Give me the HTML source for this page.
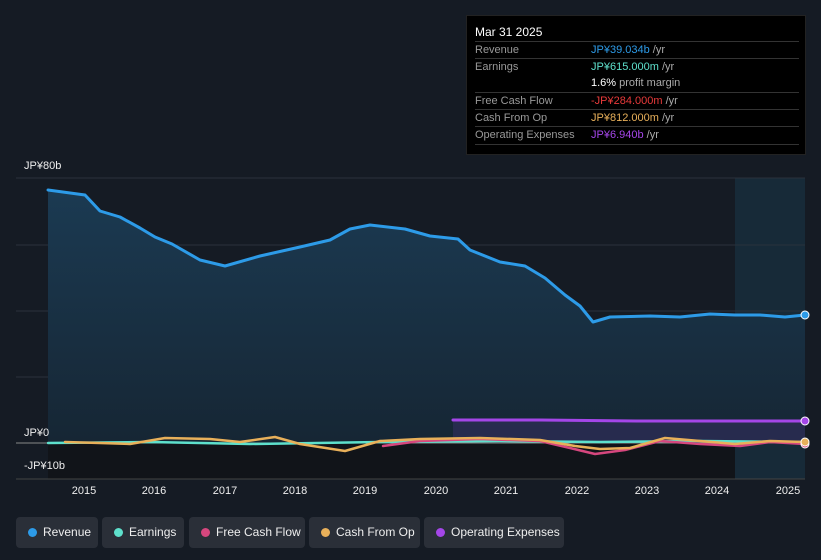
<!DOCTYPE html>
<html><head><style>
body{margin:0;width:821px;height:560px;background:#151b24;font-family:"Liberation Sans",sans-serif;overflow:hidden;position:relative;color:#ddd}
.tt{position:absolute;left:466px;top:15px;width:340px;height:140px;background:#000;border:1px solid #222;box-sizing:border-box;font-size:11px}
.tt .h{position:absolute;left:8px;top:9px;color:#fff;font-size:12px}
.row{position:absolute;left:8px;width:324px;border-top:1px solid #333;height:17px;line-height:17px;color:#999}
.row span{position:absolute;left:116px}
.lg{position:absolute;top:517px;height:31px;background:#2a2f38;border-radius:4px;font-size:12px;color:#eee;line-height:31px;box-sizing:border-box;padding-left:27px}
.lg i{position:absolute;left:12px;top:11px;width:9px;height:9px;border-radius:50%}
.yl{position:absolute;font-size:11px;color:#eee}
.xl{position:absolute;top:485px;font-size:11px;color:#eee;width:40px;text-align:center}
</style></head><body>
<svg width="821" height="560" style="position:absolute;left:0;top:0">
<defs><linearGradient id="g" x1="0" y1="0" x2="0" y2="1"><stop offset="0" stop-color="#1b3a52"/><stop offset="1" stop-color="#162634"/></linearGradient></defs>
<rect x="48" y="443" width="687" height="36" fill="#111419"/>
<rect x="735" y="178" width="70" height="301" fill="#172a38"/>
<line x1="16" y1="178" x2="805" y2="178" stroke="#2a313b"/>
<line x1="16" y1="245" x2="805" y2="245" stroke="#2a313b"/>
<line x1="16" y1="311" x2="805" y2="311" stroke="#2a313b"/>
<line x1="16" y1="377" x2="805" y2="377" stroke="#2a313b"/>
<path d="M48,190 L85,195 L100,211 L120,217 L140,228 L155,237 L172,244 L200,260 L225,266 L260,256 L300,247 L330,240 L350,229 L370,225 L405,229 L430,236 L458,239 L470,250 L500,262 L525,266 L545,278 L565,295 L580,306 L593,322 L610,317 L650,316 L680,317 L710,314 L735,315 L760,315 L785,317 L805,315 L805,443 L48,443Z" fill="url(#g)"/>
<path d="M453,421 L805,421 L805,443 L453,443Z" fill="#2c2d55" opacity=".8"/>
<line x1="16" y1="443" x2="805" y2="443" stroke="#888"/>
<g stroke-linejoin="round" stroke-linecap="round" fill="none">
<path d="M48,190 L85,195 L100,211 L120,217 L140,228 L155,237 L172,244 L200,260 L225,266 L260,256 L300,247 L330,240 L350,229 L370,225 L405,229 L430,236 L458,239 L470,250 L500,262 L525,266 L545,278 L565,295 L580,306 L593,322 L610,317 L650,316 L680,317 L710,314 L735,315 L760,315 L785,317 L805,315" stroke="#2d9be8" stroke-width="3"/>
<path d="M453,420 L540,420 L640,421 L805,421" stroke="#a446e8" stroke-width="3"/>
<path d="M48,443 L150,442 L250,444 L380,442 L500,441 L600,442 L700,441 L805,442" stroke="#5ee0cc" stroke-width="2.5"/>
<path d="M383,446 L420,441 L480,439 L540,441 L570,448 L595,454 L625,450 L660,441 L700,444 L740,446 L770,442 L805,444" stroke="#d6477e" stroke-width="2.5"/>
<path d="M65,442 L100,443 L130,444 L165,438 L210,439 L240,442 L275,437 L300,444 L345,451 L380,441 L420,439 L480,438 L540,440 L575,446 L600,449 L630,448 L665,438 L700,441 L735,444 L770,441 L805,442" stroke="#e8b05a" stroke-width="2.5"/>
</g>
<line x1="16" y1="479" x2="805" y2="479" stroke="#444"/>
<circle cx="805" cy="315" r="4" fill="#2d9be8" stroke="#fff"/>
<circle cx="805" cy="421" r="4" fill="#a446e8" stroke="#fff"/>
<circle cx="805" cy="444" r="4" fill="#d6477e" stroke="#fff"/>
<circle cx="805" cy="442" r="4" fill="#e8b05a" stroke="#fff"/>
</svg>
<div class="yl" style="left:24px;top:160px">JP¥80b</div>
<div class="yl" style="left:24px;top:427px">JP¥0</div>
<div class="yl" style="left:24px;top:460px">-JP¥10b</div>
<div class="xl" style="left:64px">2015</div><div class="xl" style="left:134px">2016</div><div class="xl" style="left:205px">2017</div><div class="xl" style="left:275px">2018</div><div class="xl" style="left:345px">2019</div><div class="xl" style="left:416px">2020</div><div class="xl" style="left:486px">2021</div><div class="xl" style="left:557px">2022</div><div class="xl" style="left:627px">2023</div><div class="xl" style="left:697px">2024</div><div class="xl" style="left:768px">2025</div>
<div class="tt"><div class="h">Mar 31 2025</div>
<div class="row" style="top:25px">Revenue<span style="color:#2d9be8">JP¥39.034b <b style="color:#aaa;font-weight:normal">/yr</b></span></div>
<div class="row" style="top:42px">Earnings<span style="color:#5ee0cc">JP¥615.000m <b style="color:#aaa;font-weight:normal">/yr</b></span></div>
<div class="row" style="top:59px;border:0"><span style="color:#fff">1.6% <b style="color:#aaa;font-weight:normal">profit margin</b></span></div>
<div class="row" style="top:76px">Free Cash Flow<span style="color:#e83a3a">-JP¥284.000m <b style="color:#aaa;font-weight:normal">/yr</b></span></div>
<div class="row" style="top:93px">Cash From Op<span style="color:#e8b05a">JP¥812.000m <b style="color:#aaa;font-weight:normal">/yr</b></span></div>
<div class="row" style="top:110px;border-bottom:1px solid #333">Operating Expenses<span style="color:#a446e8">JP¥6.940b <b style="color:#aaa;font-weight:normal">/yr</b></span></div>
</div>
<div class="lg" style="left:16px;width:82px"><i style="background:#2d9be8"></i>Revenue</div>
<div class="lg" style="left:102px;width:82px"><i style="background:#5ee0cc"></i>Earnings</div>
<div class="lg" style="left:189px;width:116px"><i style="background:#d6477e"></i>Free Cash Flow</div>
<div class="lg" style="left:309px;width:111px"><i style="background:#e8b05a"></i>Cash From Op</div>
<div class="lg" style="left:424px;width:140px"><i style="background:#a446e8"></i>Operating Expenses</div>
</body></html>
